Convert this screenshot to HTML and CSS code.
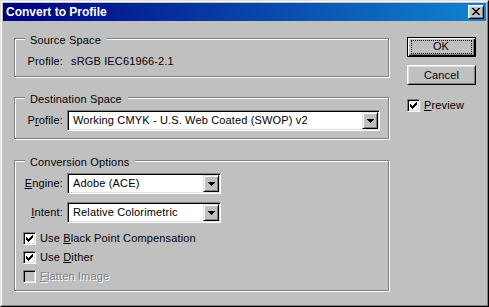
FILE: index.html
```html
<!DOCTYPE html>
<html>
	<head>
		<meta charset="UTF-8">
		<title>Convert to Profile</title>
		<link rel="stylesheet" href="styles.css">
	</head>
	<body>
		<div class="window">
			<div class="frame">
				<div class="titlebar">
					<span class="title">Convert to Profile</span>
					<span class="close">
						<svg width="8" height="7" viewBox="0 0 8 7" shape-rendering="crispEdges"><path d="M0 0h2v1H0z M6 0h2v1H6z M1 1h2v1H1z M5 1h2v1H5z M2 2h4v1H2z M3 3h2v1H3z M2 4h4v1H2z M1 5h2v1H1z M5 5h2v1H5z M0 6h2v1H0z M6 6h2v1H6z" fill="#000"/></svg>
					</span>
				</div>
				<div class="body">
					<div class="groups">
						<!-- source -->
						<div class="group group-source">
							<div class="group-title">Source Space</div>
							<div class="row row-info">
								<span class="label">Profile:</span>
								<span class="value">sRGB IEC61966-2.1</span>
							</div>
						</div>
						<!-- destination -->
						<div class="group group-dest">
							<div class="group-title">Destination Space</div>
							<div class="row row-first">
								<span class="label">P<u>r</u>ofile:</span>
								<div class="select select-wide">
									<span class="select-text">Working CMYK - U.S. Web Coated (SWOP) v2</span>
									<span class="drop"><svg width="7" height="4" viewBox="0 0 7 4" shape-rendering="crispEdges"><path d="M0 0h7v1H0z M1 1h5v1H1z M2 2h3v1H2z M3 3h1v1H3z" fill="#000"/></svg></span>
								</div>
							</div>
						</div>
						<!-- conversion -->
						<div class="group group-conv">
							<div class="group-title">Conversion Options</div>
							<div class="row row-first">
								<span class="label"><u>E</u>ngine:</span>
								<div class="select select-short">
									<span class="select-text">Adobe (ACE)</span>
									<span class="drop"><svg width="7" height="4" viewBox="0 0 7 4" shape-rendering="crispEdges"><path d="M0 0h7v1H0z M1 1h5v1H1z M2 2h3v1H2z M3 3h1v1H3z" fill="#000"/></svg></span>
								</div>
							</div>
							<div class="row row-next">
								<span class="label"><u>I</u>ntent:</span>
								<div class="select select-short">
									<span class="select-text">Relative Colorimetric</span>
									<span class="drop"><svg width="7" height="4" viewBox="0 0 7 4" shape-rendering="crispEdges"><path d="M0 0h7v1H0z M1 1h5v1H1z M2 2h3v1H2z M3 3h1v1H3z" fill="#000"/></svg></span>
								</div>
							</div>
							<div class="check check-first">
								<span class="box"><svg width="7" height="7" viewBox="0 0 7 7" shape-rendering="crispEdges"><path d="M0 2h1v3H0z M1 3h1v3H1z M2 4h1v3H2z M3 3h1v3H3z M4 2h1v3H4z M5 1h1v3H5z M6 0h1v3H6z" fill="#000"/></svg></span>
								<span>Use <u>B</u>lack Point Compensation</span>
							</div>
							<div class="check">
								<span class="box"><svg width="7" height="7" viewBox="0 0 7 7" shape-rendering="crispEdges"><path d="M0 2h1v3H0z M1 3h1v3H1z M2 4h1v3H2z M3 3h1v3H3z M4 2h1v3H4z M5 1h1v3H5z M6 0h1v3H6z" fill="#000"/></svg></span>
								<span>Use <u>D</u>ither</span>
							</div>
							<div class="check disabled">
								<span class="box"></span>
								<span><u>F</u>latten Image</span>
							</div>
						</div>
					</div>
					<div class="buttons">
						<div class="btn btn-default"><span class="focus">OK</span></div>
						<div class="btn">Cancel</div>
						<div class="check check-preview">
							<span class="box"><svg width="7" height="7" viewBox="0 0 7 7" shape-rendering="crispEdges"><path d="M0 2h1v3H0z M1 3h1v3H1z M2 4h1v3H2z M3 3h1v3H3z M4 2h1v3H4z M5 1h1v3H5z M6 0h1v3H6z" fill="#000"/></svg></span>
							<span><u>P</u>review</span>
						</div>
					</div>
				</div>
			</div>
		</div>
	</body>
</html>
```

FILE: styles.css
```css
body {
	margin: 0;
	background: #c0c0c0;
}

.window {
	width: 489px;
	height: 307px;
	box-sizing: border-box;
	border: 1px solid;
	border-color: #dfdfdf #000 #000 #dfdfdf;
	background: #c0c0c0;
	font-family: "Liberation Sans", Arial, sans-serif;
	font-size: 11px;
	letter-spacing: 0.15px;
	color: #000;
}

.frame {
	height: 100%;
	box-sizing: border-box;
	border: 1px solid;
	border-color: #fff #808080 #808080 #fff;
	padding: 1px;
}

.titlebar {
	height: 18px;
	display: flex;
	align-items: center;
	justify-content: space-between;
	padding: 0 2px 0 3px;
	background: linear-gradient(to right, #000080, #1084d0);
	color: #fff;
	font-weight: bold;
	font-size: 12px;
	letter-spacing: 0;
	line-height: 18px;
}

.close {
	width: 16px;
	height: 14px;
	box-sizing: border-box;
	display: flex;
	align-items: center;
	justify-content: center;
	padding: 0 1px 1px 0;
	background: #c0c0c0;
	border: 1px solid;
	border-color: #fff #000 #000 #fff;
	box-shadow: inset 1px 1px 0 #dfdfdf, inset -1px -1px 0 #808080;
}

.close svg,
.drop svg,
.box svg {
	display: block;
}

.body {
	display: flex;
	padding-left: 11px;
}

.groups {
	width: 375px;
	padding-top: 17px;
}

/* etched group box */
.group {
	display: flex;
	flex-direction: column;
	border: 1px solid #808080;
	box-shadow: 1px 1px 0 #fff, inset 1px 1px 0 #fff;
	padding: 0 8px 7px 8px;
	line-height: 13px;
}

.group-source {
	padding-bottom: 8px;
}

.group-dest {
	margin-top: 20px;
}

.group-conv {
	margin-top: 21px;
}

.group-title {
	align-self: flex-start;
	margin: -5px 0 0 2px;
	padding: 0 6px 0 5px;
	background: #c0c0c0;
}

.row {
	display: flex;
	align-items: center;
}

.row-info {
	margin-top: 8px;
}

.row-first {
	margin-top: 4px;
}

.row-next {
	margin-top: 8px;
}

.label {
	width: 40px;
	text-align: right;
	white-space: nowrap;
	margin-right: 4px;
}

.row-info .label {
	margin-right: 8px;
}

u {
	text-decoration: underline;
	text-underline-offset: 1px;
}

.select {
	height: 21px;
	box-sizing: border-box;
	display: flex;
	align-items: center;
	border: 1px solid;
	border-color: #808080 #fff #fff #808080;
	box-shadow: inset 1px 1px 0 #000, inset -1px -1px 0 #dfdfdf;
	background: #fff;
	padding: 1px;
}

.select-wide {
	width: 314px;
}

.select-short {
	width: 154px;
}

.select-text {
	flex: 1;
	padding-left: 4px;
	line-height: 17px;
	white-space: nowrap;
}

.drop {
	width: 16px;
	height: 17px;
	box-sizing: border-box;
	display: flex;
	align-items: center;
	justify-content: center;
	padding: 1px 0 0 0;
	background: #c0c0c0;
	border: 1px solid;
	border-color: #dfdfdf #000 #000 #dfdfdf;
	box-shadow: inset 1px 1px 0 #fff, inset -1px -1px 0 #808080;
}

/* checkboxes */
.check {
	display: flex;
	align-items: center;
	height: 13px;
	margin-top: 6px;
	white-space: nowrap;
}

.check-first {
	margin-top: 9px;
}

.box {
	width: 13px;
	height: 13px;
	box-sizing: border-box;
	display: flex;
	align-items: center;
	justify-content: center;
	margin-right: 4px;
	border: 1px solid;
	border-color: #808080 #fff #fff #808080;
	box-shadow: inset 1px 1px 0 #000, inset -1px -1px 0 #dfdfdf;
	background: #fff;
}

.disabled {
	color: #808080;
	text-shadow: 1px 1px 0 #fff;
}

.disabled .box {
	background: #c0c0c0;
}

/* buttons */
.buttons {
	width: 69px;
	margin-left: 18px;
	padding-top: 16px;
	line-height: 13px;
}

.btn {
	height: 20px;
	box-sizing: border-box;
	display: flex;
	align-items: center;
	justify-content: center;
	margin-top: 8px;
	border: 1px solid;
	border-color: #fff #000 #000 #fff;
	box-shadow: inset 1px 1px 0 #dfdfdf, inset -1px -1px 0 #808080;
}

.btn-default {
	margin-top: 0;
	border-color: #000;
	box-shadow: inset 1px 1px 0 #fff, inset -1px -1px 0 #000, inset -2px -2px 0 #808080;
}

.focus {
	width: 59px;
	height: 12px;
	display: flex;
	align-items: center;
	justify-content: center;
	border: 1px dotted #000;
	margin: 0 1px 1px 0;
}

.check-preview {
	margin-top: 14px;
}
```
